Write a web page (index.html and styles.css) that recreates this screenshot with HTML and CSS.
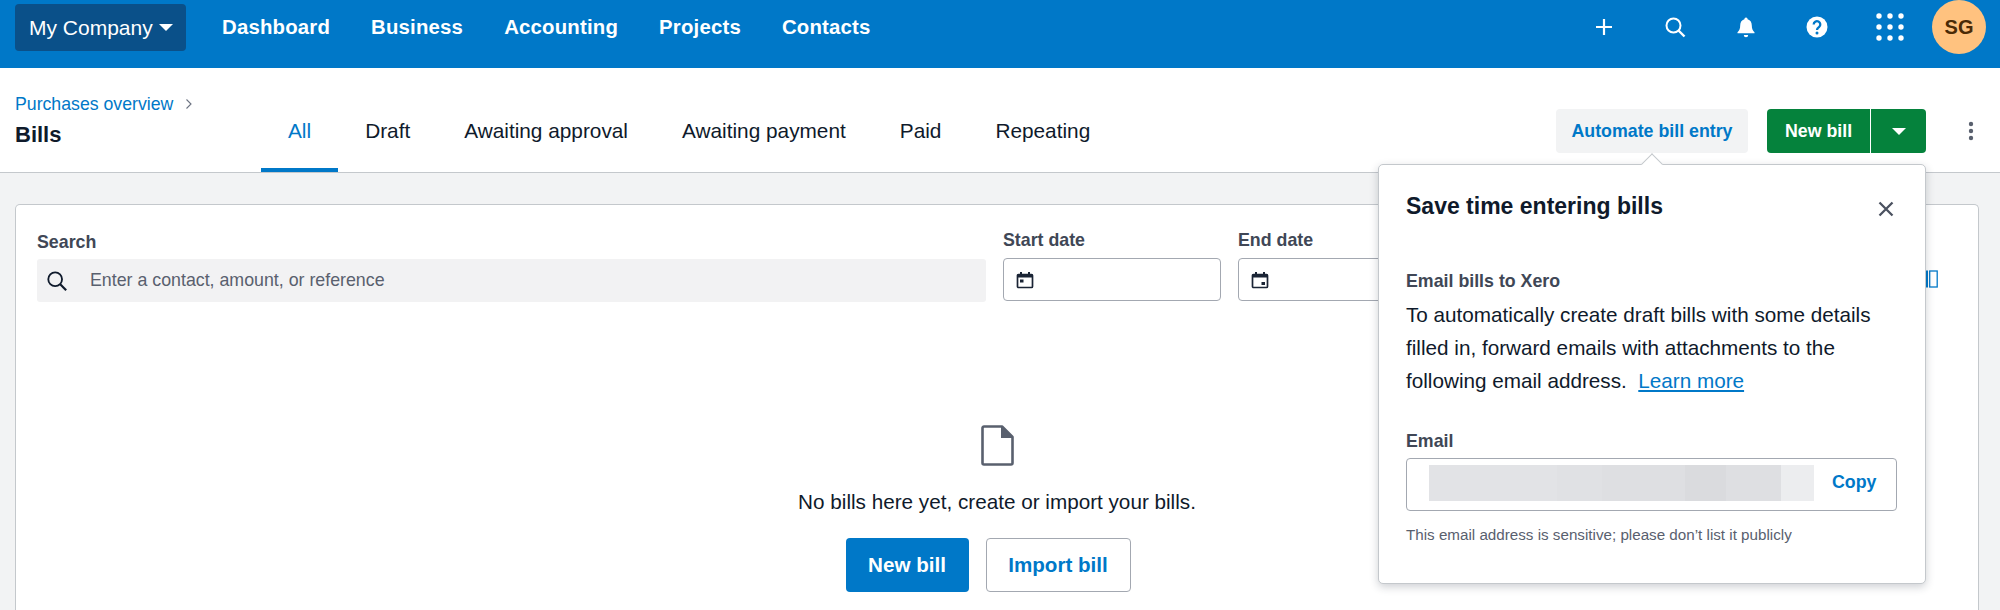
FILE: index.html
```html
<!DOCTYPE html>
<html lang="en">
<head>
<meta charset="utf-8">
<title>Bills</title>
<link rel="stylesheet" href="styles.css">
</head>
<body>
<header class="topbar">
  <button class="org">My Company <span class="caret"></span></button>
  <nav class="mainnav">
    <a>Dashboard</a><a>Business</a><a>Accounting</a><a>Projects</a><a>Contacts</a>
  </nav>
  <div class="tools">
    <svg class="tool" viewBox="0 0 24 24"><path d="M12 4v16M4 12h16" stroke="#fff" stroke-width="2.2" fill="none"/></svg>
    <svg class="tool" viewBox="0 0 24 24"><circle cx="10.5" cy="10.5" r="7" stroke="#fff" stroke-width="2" fill="none"/><path d="M15.5 15.5l6 6" stroke="#fff" stroke-width="2.4" fill="none"/></svg>
    <svg class="tool" viewBox="0 0 24 24"><path d="M12 2.5a1.6 1.6 0 0 1 1.6 1.7c3 .8 4.2 3.3 4.2 6.3 0 3.5 1 5 2.7 6.7v1H3.5v-1c1.7-1.700 2.700-3.200 2.700-6.700 0-3 1.200-5.500 4.200-6.300A1.600 1.600 0 0 1 12 2.500zM9.800 20h4.400a2.200 2.200 0 0 1-4.400 0z" fill="#fff"/></svg>
    <svg class="tool" viewBox="0 0 24 24"><circle cx="12" cy="12" r="10.500" fill="#fff"/><path d="M8.700 9.500a3.300 3.300 0 1 1 5.300 2.600c-1.300 1-2 1.500-2 3" stroke="#0078c8" stroke-width="2.300" fill="none"/><circle cx="12" cy="18" r="1.500" fill="#0078c8"/></svg>
    <svg class="tool grid" viewBox="0 0 28 28"><g fill="#fff"><circle cx="3" cy="3" r="2.700"/><circle cx="14" cy="3" r="2.700"/><circle cx="25" cy="3" r="2.700"/><circle cx="3" cy="14" r="2.700"/><circle cx="14" cy="14" r="2.700"/><circle cx="25" cy="14" r="2.700"/><circle cx="3" cy="25" r="2.700"/><circle cx="14" cy="25" r="2.700"/><circle cx="25" cy="25" r="2.700"/></g></svg>
    <div class="avatar">SG</div>
  </div>
</header>

<section class="pagehead">
  <div class="titles">
    <div class="crumb"><a>Purchases overview</a><svg class="chev" viewBox="0 0 8 12"><path d="M1.500 1.500L6 6l-4.500 4.500" stroke="#6b7280" stroke-width="1.100" fill="none"/></svg></div>
    <h1>Bills</h1>
  </div>
  <div class="tabs">
    <a class="tab on">All</a><a class="tab">Draft</a><a class="tab">Awaiting approval</a><a class="tab">Awaiting payment</a><a class="tab">Paid</a><a class="tab">Repeating</a>
  </div>
  <div class="actions">
    <button class="auto">Automate bill entry</button>
    <div class="split">
      <button class="split-main">New bill</button>
      <button class="split-caret"><span class="caret"></span></button>
    </div>
    <svg class="kebab" viewBox="0 0 6 20"><g fill="#59606e"><circle cx="3" cy="3" r="2.200"/><circle cx="3" cy="10" r="2.200"/><circle cx="3" cy="17" r="2.200"/></g></svg>
  </div>
</section>

<main class="content">
  <div class="card">
    <div class="filters">
      <div class="field search-field">
        <label>Search</label>
        <div class="search">
          <svg class="search-ico" viewBox="0 0 24 24"><circle cx="10" cy="10" r="7.500" stroke="#0f1a2b" stroke-width="2" fill="none"/><path d="M15.500 15.500l6.500 6.500" stroke="#0f1a2b" stroke-width="2.400" fill="none"/></svg>
          <span>Enter a contact, amount, or reference</span>
        </div>
      </div>
      <div class="field date-field">
        <label>Start date</label>
        <div class="date">
          <svg class="cal" viewBox="0 0 18 18"><path d="M1.500 4.500a1 1 0 0 1 1-1h13a1 1 0 0 1 1 1v11a1 1 0 0 1-1 1h-13a1 1 0 0 1-1-1z" fill="none" stroke="#1a2435" stroke-width="1.700"/><path d="M1 3.500h16v3H1zM4 1h2v3H4zM12 1h2v3h-2z" fill="#1a2435"/><rect x="4" y="8.500" width="3.500" height="3" fill="#1a2435"/></svg>
        </div>
      </div>
      <div class="field date-field end-field">
        <label>End date</label>
        <div class="date">
          <svg class="cal" viewBox="0 0 18 18"><path d="M1.500 4.500a1 1 0 0 1 1-1h13a1 1 0 0 1 1 1v11a1 1 0 0 1-1 1h-13a1 1 0 0 1-1-1z" fill="none" stroke="#1a2435" stroke-width="1.700"/><path d="M1 3.500h16v3H1zM4 1h2v3H4zM12 1h2v3h-2z" fill="#1a2435"/><rect x="10.500" y="11" width="3.500" height="3" fill="#1a2435"/></svg>
        </div>
      </div>
      <svg class="cols" viewBox="0 0 16 18"><path d="M0 .5h6v17H0z" fill="#0078c8"/><rect x="7.700" y="1" width="7.500" height="16" fill="none" stroke="#0078c8" stroke-width="1.300"/></svg>
    </div>
    <div class="empty">
      <svg class="doc" viewBox="0 0 33 41"><path d="M3 1.500h18l10.500 10.500v26a1.500 1.500 0 0 1-1.500 1.500H3A1.500 1.500 0 0 1 1.500 38V3A1.500 1.500 0 0 1 3 1.500z" fill="#fff" stroke="#59606e" stroke-width="2.600" stroke-linejoin="round"/><path d="M20 1v12h12z" fill="#59606e"/></svg>
      <p>No bills here yet, create or import your bills.</p>
      <div class="empty-btns">
        <button class="primary">New bill</button>
        <button class="outline">Import bill</button>
      </div>
    </div>
  </div>
</main>

<aside class="popover">
  <span class="arrow"></span>
  <div class="pop-head">
    <h2>Save time entering bills</h2>
    <svg class="close" viewBox="0 0 16 16"><path d="M1.500 1.500l13 13M14.500 1.500l-13 13" stroke="#4b5260" stroke-width="2.300" fill="none"/></svg>
  </div>
  <h3>Email bills to Xero</h3>
  <p class="pop-body">To automatically create draft bills with some details filled in, forward emails with attachments to the following email address. &nbsp;<a>Learn more</a></p>
  <label class="pop-label">Email</label>
  <div class="email-box">
    <div class="redact">
      <i class="r1"></i><i class="r2"></i><i class="r3"></i><i class="r4"></i><i class="r5"></i><i class="r6"></i>
    </div>
    <a class="copy">Copy</a>
  </div>
  <p class="hint">This email address is sensitive; please don’t list it publicly</p>
</aside>
</body>
</html>
```
FILE: styles.css
```css
* { box-sizing: border-box; }
html, body { height: 100%; }
body {
  margin: 0;
  height: 610px;
  overflow: hidden;
  position: relative;
  background: #f2f3f4;
  font-family: "Liberation Sans", Arial, sans-serif;
  color: #0f1a2b;
}
button { font-family: inherit; cursor: pointer; }

.topbar {
  height: 68px;
  background: #0078c8;
  display: flex;
  align-items: center;
  padding: 0 14px 0 15px;
}
.org {
  width: 171px;
  height: 47px;
  margin-top: -13px;
  background: #0a5089;
  border: 0;
  border-radius: 4px;
  color: #fff;
  font-size: 21px;
  padding: 0 0 0 14px;
  text-align: left;
  display: flex;
  align-items: center;
  gap: 6px;
}
.caret {
  display: inline-block;
  width: 0;
  height: 0;
  border-left: 7px solid transparent;
  border-right: 7px solid transparent;
  border-top: 7px solid #fff;
}
.mainnav {
  display: flex;
  gap: 41px;
  margin-left: 36px;
  margin-top: -13px;
}
.mainnav a {
  color: #fff;
  font-size: 20.350px;
  font-weight: 700;
  letter-spacing: .2px;
}
.tools {
  margin-left: auto;
  display: flex;
  align-items: center;
  margin-top: -14px;
}
.tool { width: 24px; height: 24px; margin-right: 47px; }
.grid { width: 28px; height: 28px; margin-right: 28px; }
.avatar {
  width: 54px;
  height: 54px;
  border-radius: 50%;
  background: #ffc27f;
  color: #4a2a06;
  font-size: 20px;
  font-weight: 700;
  display: flex;
  align-items: center;
  justify-content: center;
}

.pagehead {
  height: 105px;
  background: #fff;
  border-bottom: 1px solid #c4c8cc;
  display: flex;
  padding: 0 0 0 15px;
}
.titles { width: 246px; padding-top: 26px; }
.crumb { display: flex; align-items: center; gap: 12px; font-size: 17.700px; color: #0078c8; height: 20px; }
.chev { width: 8px; height: 12px; }
.crumb a { color: #0078c8; }
h1 { margin: 7px 0 0; font-size: 22px; line-height: 28px; font-weight: 700; }
.tabs { display: flex; height: 104px; }
.tab {
  padding: 51px 27px 0;
  font-size: 20.800px;
  line-height: 24px;
  color: #0f1a2b;
  border-bottom: 4px solid transparent;
}
.tab.on { color: #0078c8; border-bottom-color: #0078c8; }
.actions {
  margin-left: auto;
  display: flex;
  align-items: flex-start;
  padding-top: 41px;
}
.auto {
  width: 192px;
  height: 44px;
  border: 0;
  border-radius: 4px;
  background: #f2f3f4;
  color: #0078c8;
  font-size: 17.800px;
  font-weight: 700;
}
.split { display: flex; margin-left: 19px; height: 44px; }
.split-main, .split-caret {
  border: 0;
  background: #05823c;
  color: #fff;
  font-size: 17.800px;
  font-weight: 700;
}
.split-main { width: 103px; border-radius: 4px 0 0 4px; }
.split-caret {
  width: 55px;
  margin-left: 1px;
  border-radius: 0 4px 4px 0;
  display: flex;
  align-items: center;
  justify-content: center;
}
.kebab { width: 6px; height: 20px; margin: 12px 26px 0 42px; }

.content { padding: 31px 21px 0 15px; }
.card {
  height: 406px;
  background: #fff;
  border: 1px solid #c4c8cc;
  border-bottom: 0;
  border-radius: 5px 5px 0 0;
}
.filters {
  display: flex;
  padding: 25px 0 0 21px;
  height: 220px;
  align-items: flex-start;
}
.field label {
  display: block;
  font-size: 17.800px;
  line-height: 20px;
  font-weight: 700;
  color: #404756;
}
.search-field { width: 949px; padding-top: 2px; }
.search-field label { margin-bottom: 7px; }
.search {
  height: 43px;
  background: #f2f2f3;
  border-radius: 3px;
  display: flex;
  align-items: center;
  padding-left: 9px;
  font-size: 17.800px;
  color: #59606e;
}
.search-ico { width: 22px; height: 22px; margin-right: 22px; }
.date-field { width: 218px; margin-left: 17px; }
.date-field label { margin-bottom: 8px; }
.date {
  height: 43px;
  border: 1px solid #a3a8b1;
  border-radius: 4px;
  display: flex;
  align-items: center;
  padding-left: 12px;
}
.cal { width: 18px; height: 18px; }
.end-field { width: 300px; }
.cols { width: 16px; height: 18px; margin: 40px 0 0 384px; }
.empty { display: flex; flex-direction: column; align-items: center; }
.doc { width: 33px; height: 41px; }
.empty p { margin: 24px 0 0; font-size: 20.700px; line-height: 24px; }
.empty-btns { display: flex; gap: 17px; margin: 24px 18px 0 0; }
.primary, .outline {
  height: 54px;
  border-radius: 4px;
  font-size: 20.600px;
  font-weight: 700;
}
.primary { width: 123px; background: #0078c8; border: 0; color: #fff; }
.outline { width: 145px; background: #fff; border: 1px solid #a3a8b1; color: #0078c8; }

.popover {
  position: absolute;
  left: 1378px;
  top: 164px;
  width: 548px;
  height: 420px;
  background: #fff;
  border: 1px solid #c4c8cc;
  border-radius: 5px;
  box-shadow: 0 3px 8px rgba(30, 40, 60, .22);
  padding: 0 27px;
}
.arrow {
  position: absolute;
  top: -9px;
  left: 265px;
  width: 16px;
  height: 16px;
  background: #fff;
  border-left: 1px solid #c4c8cc;
  border-top: 1px solid #c4c8cc;
  transform: rotate(45deg) scale(.95);
}
.pop-head { display: flex; justify-content: space-between; align-items: center; height: 83px; padding-right: 4px; }
h2 { margin: 0; font-size: 23px; font-weight: 700; }
.close { width: 16px; height: 16px; margin-top: 5px; }
h3 { margin: 23px 0 0; font-size: 17.800px; line-height: 21px; font-weight: 700; color: #404756; }
.pop-body { margin: 6px 0 0; font-size: 20.700px; line-height: 33px; width: 491px; }
.pop-body a { color: #0078c8; text-decoration: underline; }
.pop-label { display: block; margin-top: 34px; font-size: 17.800px; line-height: 20px; font-weight: 700; color: #404756; }
.email-box {
  margin-top: 7px;
  height: 53px;
  border: 1px solid #a3a8b1;
  border-radius: 4px;
  display: flex;
  align-items: flex-start;
  padding: 6px 0 0 22px;
  width: 491px;
}
.redact { display: flex; height: 36px; width: 385px; }
.redact i { display: block; height: 100%; }
.r1 { width: 128px; background: #e2e3e6; }
.r2 { width: 45px; background: #e0e1e4; }
.r3 { width: 83px; background: #dedfe2; }
.r4 { width: 41px; background: #dadbde; }
.r5 { width: 55px; background: #dedfe2; }
.r6 { width: 33px; background: #ecedef; }
.copy { margin: 5px 0 0 18px; font-size: 17.800px; line-height: 24px; font-weight: 700; color: #0078c8; }
.hint { margin: 14px 0 0; font-size: 15.200px; line-height: 20px; color: #59606e; }
```
